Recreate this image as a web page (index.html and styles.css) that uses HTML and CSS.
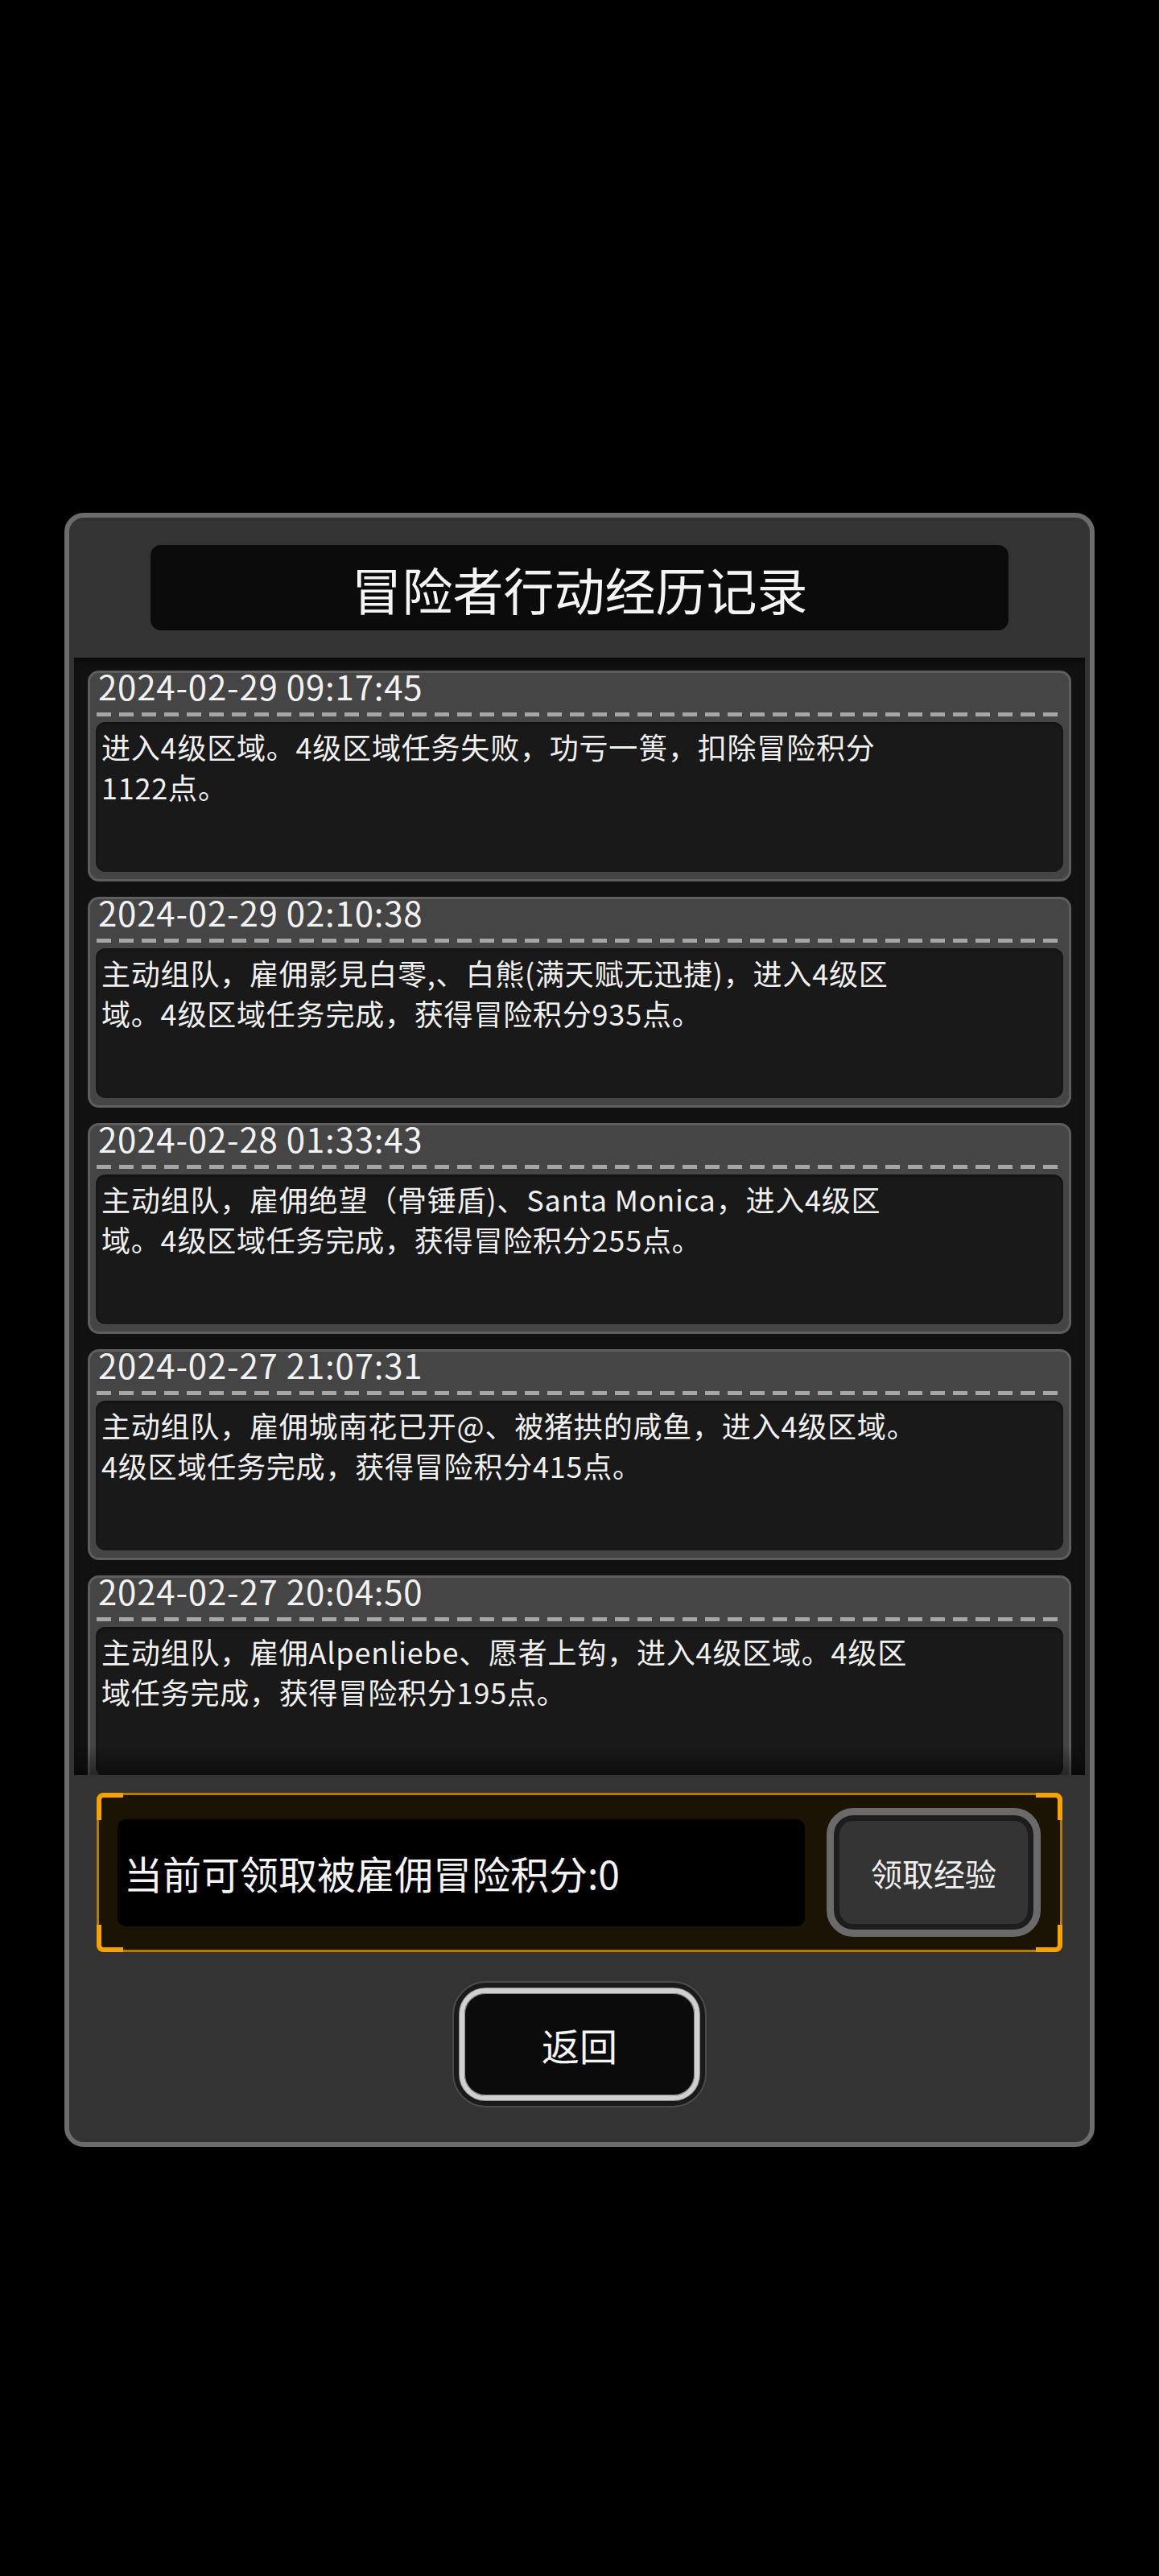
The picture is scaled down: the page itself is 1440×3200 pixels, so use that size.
FILE: index.html
```html
<!DOCTYPE html>
<html lang="zh-CN">
<head>
<meta charset="utf-8">
<title>冒险者行动经历记录</title>
<link rel="stylesheet" href="styles.css">
</head>
<body>
<div class="page">
  <div class="panel">
    <div class="title-bar"><h1 class="title">冒险者行动经历记录</h1></div>

    <div class="log-list">
      <div class="log-item">
        <div class="log-date">2024-02-29 09:17:45</div>
        <div class="log-dash"></div>
        <div class="log-body"><p>进入4级区域。4级区域任务失败，功亏一篑，扣除冒险积分<br>1122点。</p></div>
      </div>
      <div class="log-item">
        <div class="log-date">2024-02-29 02:10:38</div>
        <div class="log-dash"></div>
        <div class="log-body"><p>主动组队，雇佣影見白零,、白熊(满天赋无迅捷)，进入4级区<br>域。4级区域任务完成，获得冒险积分935点。</p></div>
      </div>
      <div class="log-item">
        <div class="log-date">2024-02-28 01:33:43</div>
        <div class="log-dash"></div>
        <div class="log-body"><p>主动组队，雇佣绝望（骨锤盾)、Santa Monica，进入4级区<br>域。4级区域任务完成，获得冒险积分255点。</p></div>
      </div>
      <div class="log-item">
        <div class="log-date">2024-02-27 21:07:31</div>
        <div class="log-dash"></div>
        <div class="log-body"><p>主动组队，雇佣城南花已开@、被猪拱的咸鱼，进入4级区域。<br>4级区域任务完成，获得冒险积分415点。</p></div>
      </div>
      <div class="log-item">
        <div class="log-date">2024-02-27 20:04:50</div>
        <div class="log-dash"></div>
        <div class="log-body"><p>主动组队，雇佣Alpenliebe、愿者上钩，进入4级区域。4级区<br>域任务完成，获得冒险积分195点。</p></div>
      </div>
      <div class="list-fade"></div>
    </div>

    <div class="claim-frame">
      <span class="corner tl"></span>
      <span class="corner tr"></span>
      <span class="corner bl"></span>
      <span class="corner br"></span>
      <div class="claim-text">当前可领取被雇佣冒险积分:0</div>
      <button class="claim-btn">领取经验</button>
    </div>

    <button class="back-btn"><span class="back-inner">返回</span></button>
  </div>
</div>
</body>
</html>
```

FILE: styles.css
```css
* {
  box-sizing: border-box;
}

html, body {
  margin: 0;
  background: #000;
}

body {
  font-family: "Noto Sans CJK SC", "Noto Sans", sans-serif;
  color: #f2f2f2;
}

.page {
  padding-top: 637px;
  padding-bottom: 533px;
}

.panel {
  width: 1280px;
  height: 2030px;
  margin: 0 auto;
  border: 6px solid #6c6c6c;
  border-radius: 24px;
  background: #333333;
  padding: 34px 6px 43px;
  display: flex;
  flex-direction: column;
  align-items: center;
}

.title-bar {
  flex-shrink: 0;
  width: 1066px;
  height: 106px;
  background: #0b0b0b;
  border-radius: 13px;
  display: flex;
  align-items: center;
  justify-content: center;
}

.title {
  margin: 0;
  font-size: 63px;
  font-weight: 400;
  line-height: 1;
  color: #f4f4f4;
}

.log-list {
  position: relative;
  flex-shrink: 0;
  align-self: stretch;
  margin-top: 34px;
  height: 1388px;
  background: #111111;
  overflow: hidden;
  padding: 16px 17px 0;
  display: flex;
  flex-direction: column;
  gap: 19px;
  box-shadow: inset 0 6px 8px -4px rgba(0, 0, 0, 0.6);
}

.log-item {
  flex-shrink: 0;
  height: 262px;
  border: 3px solid #5e5e5e;
  border-radius: 14px;
  background: #454545;
  padding: 0 7px 9px;
  display: flex;
  flex-direction: column;
}

.log-date {
  flex-shrink: 0;
  font-size: 42px;
  line-height: 32px;
  letter-spacing: 0.8px;
  padding-left: 3px;
  padding-bottom: 17px;
  white-space: nowrap;
  color: #f2f2f2;
}

.log-dash {
  flex-shrink: 0;
  height: 5px;
  margin: 0 1px;
  background: repeating-linear-gradient(90deg, #a6a6a6 0 18px, transparent 18px 28px);
}

.log-body {
  flex: 1;
  margin-top: 7px;
  background: #191919;
  border-radius: 12px;
  padding: 5px 7px;
  box-shadow: inset 0 2px 3px rgba(0, 0, 0, 0.35);
}

.log-body p {
  margin: 0;
  font-size: 36px;
  line-height: 50px;
  letter-spacing: 0.8px;
  white-space: nowrap;
  color: #f0f0f0;
}

.list-fade {
  position: absolute;
  left: 0;
  right: 0;
  bottom: 0;
  height: 36px;
  background: linear-gradient(rgba(0, 0, 0, 0), rgba(0, 0, 0, 0.45));
  pointer-events: none;
}

.claim-frame {
  position: relative;
  flex-shrink: 0;
  margin-top: 22px;
  width: 1200px;
  height: 198px;
  border: 3px solid #b47a06;
  border-radius: 8px;
  background: #1b1303;
  display: flex;
  align-items: center;
  padding: 0 24px 0 23px;
  gap: 27px;
}

.corner {
  position: absolute;
  width: 33px;
  height: 34px;
  border: 0 solid #f6a200;
}

.corner.tl {
  top: -3px;
  left: -3px;
  border-top-width: 6px;
  border-left-width: 6px;
  border-top-left-radius: 9px;
}

.corner.tr {
  top: -3px;
  right: -3px;
  border-top-width: 6px;
  border-right-width: 6px;
  border-top-right-radius: 9px;
}

.corner.bl {
  bottom: -3px;
  left: -3px;
  border-bottom-width: 6px;
  border-left-width: 6px;
  border-bottom-left-radius: 9px;
}

.corner.br {
  bottom: -3px;
  right: -3px;
  border-bottom-width: 6px;
  border-right-width: 6px;
  border-bottom-right-radius: 9px;
}

.claim-text {
  flex: 1;
  height: 133px;
  background: #000;
  border-radius: 10px;
  display: flex;
  align-items: center;
  padding-left: 8px;
  font-size: 48px;
  white-space: nowrap;
  color: #f4f4f4;
}

.claim-btn {
  flex-shrink: 0;
  width: 266px;
  height: 160px;
  border-radius: 33px;
  border: 9px solid #6a6a6a;
  background: #343434;
  box-shadow: inset 0 0 0 7px #1d1d1d;
  font-family: "Noto Sans CJK SC", "Noto Sans", sans-serif;
  font-size: 39px;
  color: #efefef;
  padding: 0;
  display: flex;
  align-items: center;
  justify-content: center;
}

.back-btn {
  flex-shrink: 0;
  margin-top: 36px;
  width: 316px;
  height: 157px;
  border-radius: 42px;
  background: #1a1a1a;
  border: 2px solid #4b4b4b;
  padding: 7px;
  font-family: "Noto Sans CJK SC", "Noto Sans", sans-serif;
  display: flex;
}

.back-inner {
  flex: 1;
  display: flex;
  align-items: center;
  justify-content: center;
  border: 6px solid #d0d0d0;
  border-radius: 32px;
  background: #0b0b0b;
  box-shadow: inset 0 0 0 1px #8a8a8a, 0 0 0 1px #8a8a8a;
  font-size: 47px;
  color: #f4f4f4;
}
```
